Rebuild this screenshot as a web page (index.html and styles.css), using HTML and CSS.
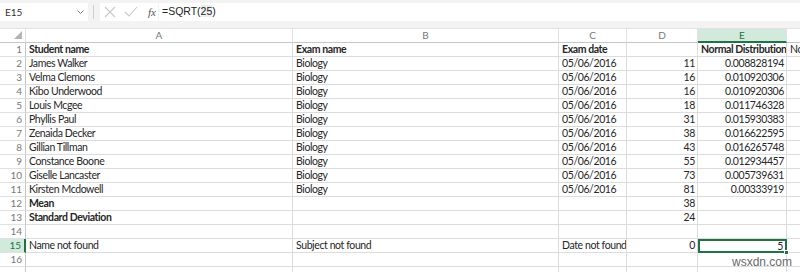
FILE: index.html
```html
<!DOCTYPE html>
<html lang="en">
<head>
    <meta charset="UTF-8">
    <title>Normal Distribution</title>
    <link rel="stylesheet" href="styles.css">
</head>
<body>
    <div class="formula-bar">
        <div class="name-box">
            <span>E15</span>
            <svg class="dropdown" width="7" height="4" viewBox="0 0 7 4"><path d="M0.5 0.5 L3.5 3.5 L6.5 0.5" fill="none" stroke="#777" stroke-width="1"/></svg>
        </div>
        <div class="bar-sep"></div>
        <div class="bar-icons">
            <svg width="12" height="12" viewBox="0 0 12 12"><path d="M1 1 L11 11 M11 1 L1 11" stroke="#c8c8c8" stroke-width="1.1"/></svg>
            <svg width="14" height="12" viewBox="0 0 14 12"><path d="M1 6 L5 10 L13 1" fill="none" stroke="#c8c8c8" stroke-width="1.1"/></svg>
            <span class="fx">fx</span>
        </div>
        <div class="formula-input">=SQRT(<span class="arg">25</span>)</div>
    </div>
    <div class="bar-gap"></div>

    <div class="sheet">
        <div class="corner"><svg width="8" height="8" viewBox="0 0 8 8"><path d="M8 0 L8 8 L0 8 Z" fill="#b4b4b4"/></svg></div>
        <div class="col-head">A</div>
        <div class="col-head">B</div>
        <div class="col-head">C</div>
        <div class="col-head">D</div>
        <div class="col-head active">E</div>
        <div class="col-head edge"></div>

        <div class="row-head">1</div>
        <div class="cell bold">Student name</div>
        <div class="cell bold">Exam name</div>
        <div class="cell bold">Exam date</div>
        <div class="cell"></div>
        <div class="cell bold num">Normal Distribution</div>
        <div class="cell edge">No</div>

        <div class="row-head">2</div>
        <div class="cell">James Walker</div>
        <div class="cell">Biology</div>
        <div class="cell">05/06/2016</div>
        <div class="cell num">11</div>
        <div class="cell num">0.008828194</div>
        <div class="cell edge"></div>

        <div class="row-head">3</div>
        <div class="cell">Velma Clemons</div>
        <div class="cell">Biology</div>
        <div class="cell">05/06/2016</div>
        <div class="cell num">16</div>
        <div class="cell num">0.010920306</div>
        <div class="cell edge"></div>

        <div class="row-head">4</div>
        <div class="cell">Kibo Underwood</div>
        <div class="cell">Biology</div>
        <div class="cell">05/06/2016</div>
        <div class="cell num">16</div>
        <div class="cell num">0.010920306</div>
        <div class="cell edge"></div>

        <div class="row-head">5</div>
        <div class="cell">Louis Mcgee</div>
        <div class="cell">Biology</div>
        <div class="cell">05/06/2016</div>
        <div class="cell num">18</div>
        <div class="cell num">0.011746328</div>
        <div class="cell edge"></div>

        <div class="row-head">6</div>
        <div class="cell">Phyllis Paul</div>
        <div class="cell">Biology</div>
        <div class="cell">05/06/2016</div>
        <div class="cell num">31</div>
        <div class="cell num">0.015930383</div>
        <div class="cell edge"></div>

        <div class="row-head">7</div>
        <div class="cell">Zenaida Decker</div>
        <div class="cell">Biology</div>
        <div class="cell">05/06/2016</div>
        <div class="cell num">38</div>
        <div class="cell num">0.016622595</div>
        <div class="cell edge"></div>

        <div class="row-head">8</div>
        <div class="cell">Gillian Tillman</div>
        <div class="cell">Biology</div>
        <div class="cell">05/06/2016</div>
        <div class="cell num">43</div>
        <div class="cell num">0.016265748</div>
        <div class="cell edge"></div>

        <div class="row-head">9</div>
        <div class="cell">Constance Boone</div>
        <div class="cell">Biology</div>
        <div class="cell">05/06/2016</div>
        <div class="cell num">55</div>
        <div class="cell num">0.012934457</div>
        <div class="cell edge"></div>

        <div class="row-head">10</div>
        <div class="cell">Giselle Lancaster</div>
        <div class="cell">Biology</div>
        <div class="cell">05/06/2016</div>
        <div class="cell num">73</div>
        <div class="cell num">0.005739631</div>
        <div class="cell edge"></div>

        <div class="row-head">11</div>
        <div class="cell">Kirsten Mcdowell</div>
        <div class="cell">Biology</div>
        <div class="cell">05/06/2016</div>
        <div class="cell num">81</div>
        <div class="cell num">0.00333919</div>
        <div class="cell edge"></div>

        <div class="row-head">12</div>
        <div class="cell bold">Mean</div>
        <div class="cell"></div>
        <div class="cell"></div>
        <div class="cell num">38</div>
        <div class="cell"></div>
        <div class="cell edge"></div>

        <div class="row-head">13</div>
        <div class="cell bold">Standard Deviation</div>
        <div class="cell"></div>
        <div class="cell"></div>
        <div class="cell num">24</div>
        <div class="cell"></div>
        <div class="cell edge"></div>

        <div class="row-head">14</div>
        <div class="cell"></div>
        <div class="cell"></div>
        <div class="cell"></div>
        <div class="cell"></div>
        <div class="cell"></div>
        <div class="cell edge"></div>

        <div class="row-head active">15</div>
        <div class="cell">Name not found</div>
        <div class="cell">Subject not found</div>
        <div class="cell">Date not found</div>
        <div class="cell num">0</div>
        <div class="cell num selected">5<span class="fill-handle"></span></div>
        <div class="cell edge"></div>

        <div class="row-head">16</div>
        <div class="cell"></div>
        <div class="cell"></div>
        <div class="cell"></div>
        <div class="cell"></div>
        <div class="cell"></div>
        <div class="cell edge"></div>

        <div class="row-head"></div>
        <div class="cell"></div>
        <div class="cell"></div>
        <div class="cell"></div>
        <div class="cell"></div>
        <div class="cell"></div>
        <div class="cell edge"></div>
    </div>

    <div class="watermark">wsxdn.com</div>
</body>
</html>
```

FILE: styles.css
```css
* {
    box-sizing: border-box;
}

body {
    margin: 0;
    width: 800px;
    height: 272px;
    overflow: hidden;
    background-color: #ffffff;
    font-family: Lato, "Liberation Sans", sans-serif;
    font-size: 10.5px;
    letter-spacing: -0.4px;
    color: #262626;
    position: relative;
}

/* formula bar */

.formula-bar {
    display: flex;
    align-items: center;
    height: 21px;
    padding-top: 2px;
    background-color: #f3f3f3;
}

.name-box {
    display: flex;
    align-items: center;
    justify-content: space-between;
    width: 88px;
    height: 18px;
    padding: 0 4px 0 5px;
    background-color: #ffffff;
    font-size: 10px;
    letter-spacing: 0;
    color: #333;
}

.bar-sep {
    width: 1px;
    height: 14px;
    margin: 0 6px 0 5px;
    background-color: #d0d0d0;
}

.bar-icons {
    display: flex;
    align-items: center;
    gap: 8px;
    width: 58px;
    height: 18px;
    padding-left: 4px;
    background-color: #ffffff;
}

.fx {
    font-family: "Liberation Serif", serif;
    font-style: italic;
    font-size: 11px;
    letter-spacing: 0;
    color: #555;
    margin-left: 2px;
}

.formula-input {
    flex: 1;
    height: 18px;
    margin-left: 1px;
    padding: 2px 0 0 3px;
    background-color: #ffffff;
    font-family: "Liberation Sans", sans-serif;
    font-size: 10.5px;
    letter-spacing: 0;
    color: #222;
}

.formula-input .arg {
    background-color: #eeeeee;
}

.bar-gap {
    height: 8px;
    background-color: #f3f3f3;
    border-bottom: 1px solid #e2e2e2;
}

/* grid */

.sheet {
    display: grid;
    grid-template-columns: 26px 267px 266px 68px 71px 89px 13px;
    grid-auto-rows: 14px;
}

.corner,
.col-head {
    background-color: #ffffff;
    border-right: 1px solid #e1e1e1;
    border-bottom: 1px solid #c6c6c6;
    color: #777;
    font-size: 10px;
    letter-spacing: 0;
    text-align: center;
    line-height: 13px;
}

.corner {
    display: flex;
    align-items: flex-end;
    justify-content: flex-end;
    padding: 0 3px 3px 0;
}

.col-head.active {
    background-color: #d2eadb;
    border-bottom: 2px solid #217346;
    color: #217346;
}

.col-head.edge,
.cell.edge {
    border-right: none;
}

.row-head {
    background-color: #ffffff;
    border-right: 1px solid #c6c6c6;
    border-bottom: 1px solid #e1e1e1;
    color: #777;
    font-size: 10px;
    letter-spacing: 0;
    text-align: right;
    padding-right: 3px;
    line-height: 13px;
}

.row-head.active {
    background-color: #d2eadb;
    border-right: 2px solid #217346;
    color: #217346;
}

.cell {
    border-right: 1px solid #dcdcdc;
    border-bottom: 1px solid #dcdcdc;
    padding: 0 2px 0 3px;
    line-height: 13px;
    white-space: nowrap;
    overflow: hidden;
}

.bold {
    font-weight: bold;
}

.num {
    text-align: right;
}

.selected {
    position: relative;
    overflow: visible;
    border: 2px solid #217346;
    line-height: 10px;
}

.fill-handle {
    position: absolute;
    right: -4px;
    bottom: -4px;
    width: 5px;
    height: 5px;
    background-color: #217346;
    border: 1px solid #ffffff;
}

.watermark {
    position: absolute;
    right: 8px;
    bottom: 3px;
    font-family: "Liberation Sans", sans-serif;
    font-size: 12px;
    letter-spacing: 0;
    color: #6a6a6a;
}
```
